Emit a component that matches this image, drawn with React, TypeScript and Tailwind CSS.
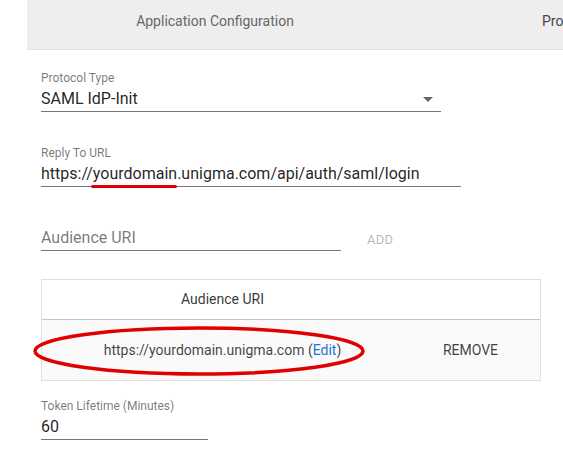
export default function App() {
  return (
    <div
      className="relative h-[473px] w-[563px] overflow-hidden bg-white text-[rgba(0,0,0,0.87)]"
      style={{ fontFamily: 'Roboto, "Liberation Sans", sans-serif' }}
    >
      {/* tab bar */}
      <div className="ml-[27px] flex h-[50px] border-b border-[#e0e0e0] bg-[#eeeeee] text-[14px] leading-[20px] text-[#666666]">
        <div className="w-[376px] shrink-0 pt-[11px] text-center">Application Configuration</div>
        <div className="shrink-0 whitespace-nowrap pl-[139px] pt-[11px] text-[#444444]">Provisioning</div>
      </div>

      <div className="pl-[41px]">
        {/* protocol type */}
        <Field label="Protocol Type" width="w-[400px]" className="mt-[20px]">
          <div className="flex items-center justify-between">
            <span>SAML IdP-Init</span>
            <svg viewBox="0 0 24 24" className="mr-[1px] h-6 w-6 fill-[rgba(0,0,0,0.6)]">
              <path d="M7 10l5 5 5-5z" />
            </svg>
          </div>
        </Field>

        {/* reply url */}
        <Field label="Reply To URL" width="w-[420px]" className="mt-[33px]">
          <span>
            https://
            <span className="relative">
              yourdomain
              <span className="absolute -left-[2px] right-0 top-[21px] h-[3px] rounded-full bg-[#e00000]" />
            </span>
            .unigma.com/api/auth/saml/login
          </span>
        </Field>

        {/* audience input */}
        <div className="mt-[39px] flex items-center">
          <div className="h-[25px] w-[300px] border-b border-[#777777] text-[16px] leading-[24px] text-[rgba(0,0,0,0.54)]">
            Audience URI
          </div>
          <div className="ml-[26px] mt-[3px] text-[13px] tracking-[0.3px] text-[rgba(0,0,0,0.3)]">ADD</div>
        </div>

        {/* audience table */}
        <div className="mt-[28px] w-[500px] border border-[#e0e0e0] text-[14px]">
          <div className="flex h-[40px] items-center border-b border-[#c4c4c4] text-[rgba(0,0,0,0.8)]">
            <div className="w-[361px] text-center">Audience URI</div>
            <div className="flex-1" />
          </div>
          <div className="flex h-[60px] items-center bg-[#fafafa] text-[rgba(0,0,0,0.75)]">
            <div className="w-[361px] text-center">
              https://yourdomain.unigma.com (<span className="text-[#1976d2]">Edit</span>)
            </div>
            <div className="flex-1 pr-[2px] text-center uppercase">Remove</div>
          </div>
        </div>

        {/* token lifetime */}
        <Field label="Token Lifetime (Minutes)" width="w-[167px]" className="mt-[17px]">
          60
        </Field>
      </div>

      {/* annotation ellipse */}
      <svg className="absolute left-[30px] top-[323px] h-[56px] w-[340px]" viewBox="0 0 340 56">
        <ellipse cx="169" cy="28" rx="164" ry="23" fill="none" stroke="#e00000" strokeWidth="3.5" />
      </svg>
    </div>
  )
}

function Field({
  label,
  width,
  className,
  children,
}: {
  label: string
  width: string
  className?: string
  children: React.ReactNode
}) {
  return (
    <div className={`${width} ${className ?? ''}`}>
      <div className="text-[12px] leading-[16px] text-[rgba(0,0,0,0.54)]">{label}</div>
      <div className="mt-[1px] h-[25px] border-b border-[#777777] text-[16px] leading-[24px]">{children}</div>
    </div>
  )
}
